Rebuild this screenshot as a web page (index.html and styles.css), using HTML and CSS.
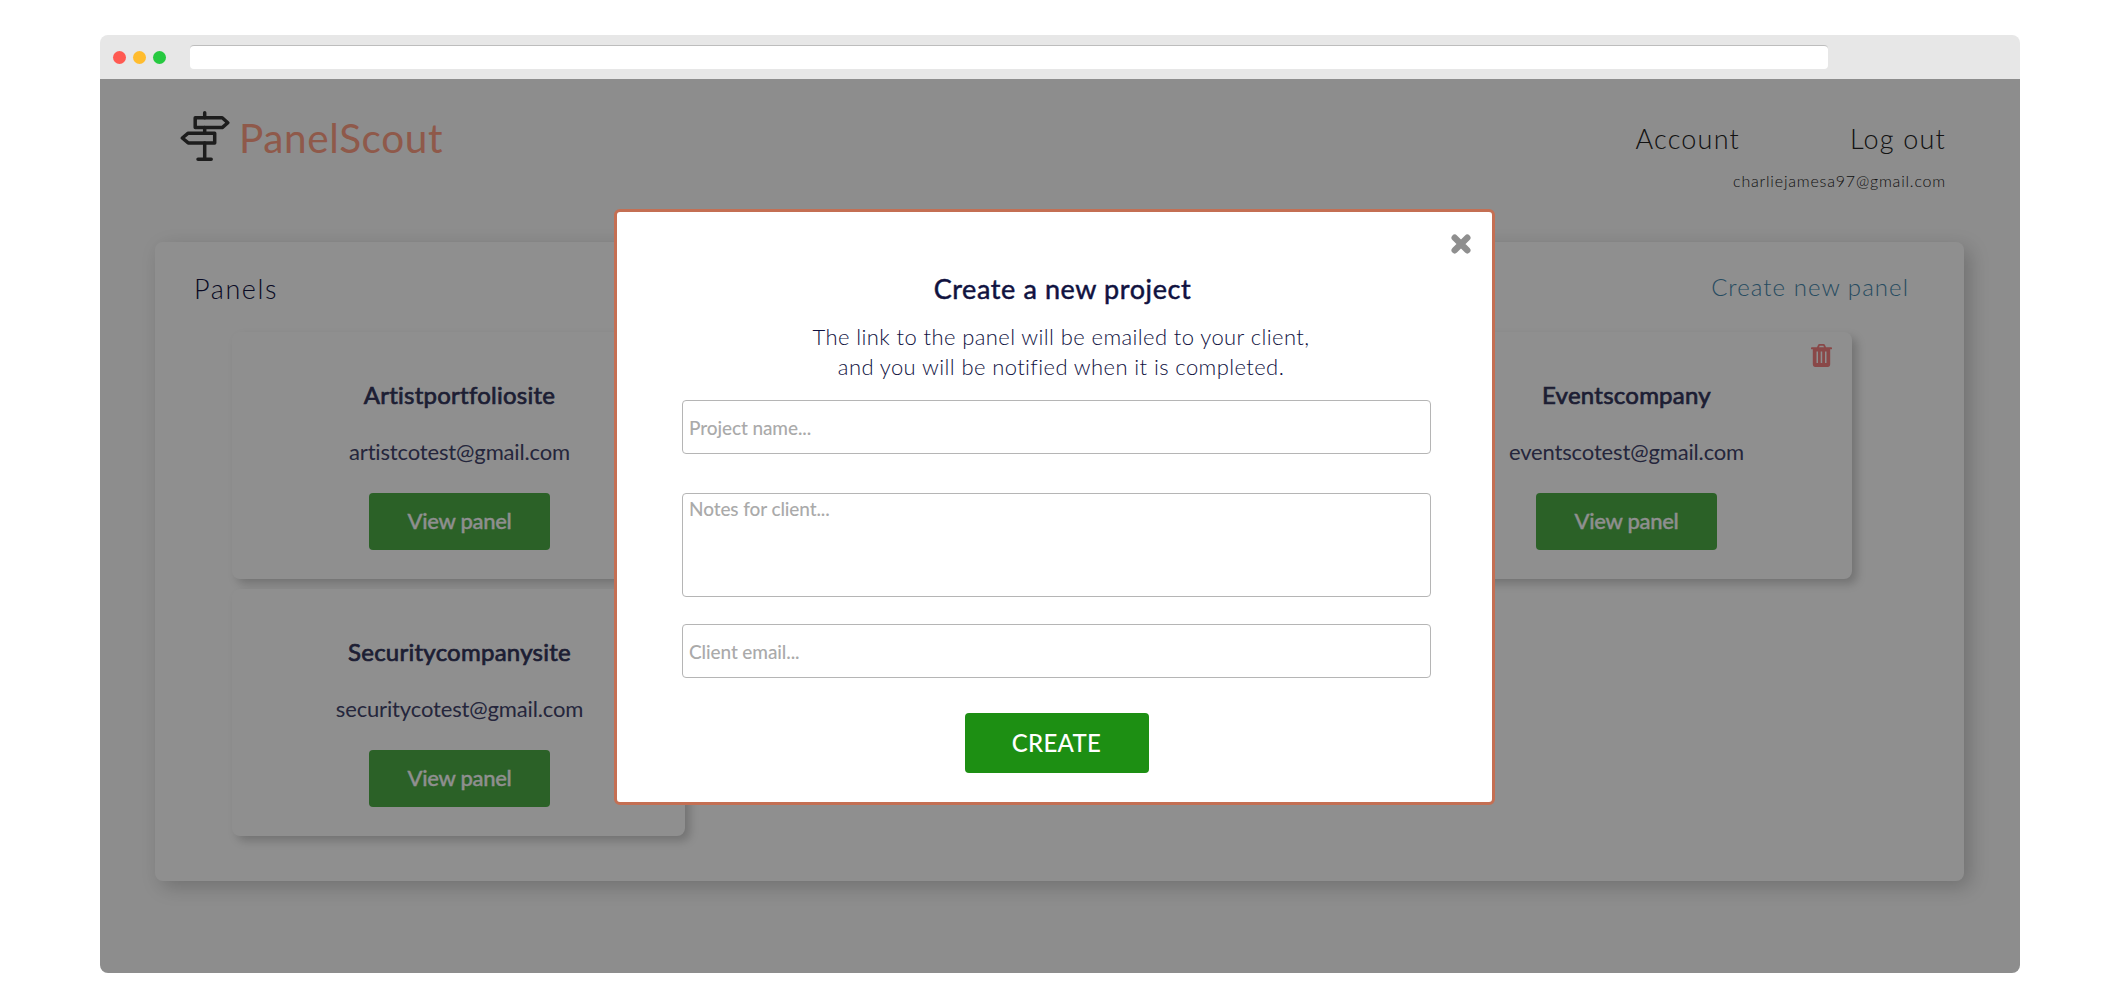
FILE: index.html
```html
<!DOCTYPE html>
<html lang="en">
  <head>
    <meta charset="UTF-8" />
    <meta name="viewport" content="width=device-width, initial-scale=1.0" />
    <title>PanelScout</title>
    <link rel="stylesheet" href="styles.css">
  </head>
  <body>
    <div class="browser">
      <div class="browser-bar">
        <span class="dot red"></span>
        <span class="dot yellow"></span>
        <span class="dot green"></span>
        <div class="address"></div>
      </div>
      <div class="page">
        <header class="header">
          <div class="logo">
            <svg class="logo-icon" viewBox="0 0 50 51" fill="none" stroke="#353535" stroke-width="3.5" stroke-linecap="round" stroke-linejoin="round">
              <path d="M24.700 1.800v5M24.700 16.500v5M24.700 32v16.300M18 48.300h13.200" />
              <path d="M15.200 6.800h27l5.600 4.900-5.600 4.900h-27z" />
              <path d="M34.700 22.200H8.200L2.300 27l5.900 4.900h26.500z" />
            </svg>
            <span class="logo-text">PanelScout</span>
          </div>
          <div class="nav">
            <div class="nav-links">
              <a class="account">Account</a>
              <a class="logout">Log out</a>
            </div>
            <div class="user-email">charliejamesa97@gmail.com</div>
          </div>
        </header>

        <main class="panels">
          <div class="panels-head">
            <h2 class="panels-title">Panels</h2>
            <a class="new-panel">Create new panel</a>
          </div>
          <div class="cards">
            <div class="card">
              <h3>Artistportfoliosite</h3>
              <p>artistcotest@gmail.com</p>
              <button class="view">View panel</button>
            </div>
            <div class="card"></div>
            <div class="card">
              <svg class="trash" viewBox="0 0 21 23">
                <path fill="#f58080" fill-rule="evenodd" d="M6 3.300 7 .9Q7.400 0 8.400 0h4.200q1 0 1.400.9l1 2.400h5.200q.8 0 .8.700v.700q0 .6-.7.600h-1.100V20q0 3-2.500 3H4.300q-2.500 0-2.500-3V5.300H.7Q0 5.300 0 4.700V4q0-.7.800-.7zM8 3.300h5l-.7-1.600H8.700zM5.500 7.500v11.500H7V7.500zM9.700 7.500v11.500h1.500V7.500zM14 7.500v11.500h1.500V7.500z" />
              </svg>
              <h3>Eventscompany</h3>
              <p>eventscotest@gmail.com</p>
              <button class="view">View panel</button>
            </div>
            <div class="card">
              <h3>Securitycompanysite</h3>
              <p>securitycotest@gmail.com</p>
              <button class="view">View panel</button>
            </div>
          </div>
        </main>

        <div class="overlay">
          <div class="modal">
            <svg class="close" viewBox="0 0 20 20" stroke="#8f8f8f" stroke-width="6.400" stroke-linecap="round">
              <path d="M3.700 3.700l12.600 12.600M16.300 3.700L3.700 16.300" />
            </svg>
            <h2 class="modal-title">Create a new project</h2>
            <p class="modal-text">The link to the panel will be emailed to your client,<br>and you will be notified when it is completed.</p>
            <form class="form">
              <input class="field" type="text" placeholder="Project name...">
              <textarea class="field notes" placeholder="Notes for client..."></textarea>
              <input class="field" type="text" placeholder="Client email...">
              <button class="create" type="button">CREATE</button>
            </form>
          </div>
        </div>
      </div>
    </div>
  </body>
</html>
```
FILE: styles.css
```css
* {
  box-sizing: border-box;
}
body {
  margin: 0;
  padding: 35px 100px;
  background-color: #fff;
  font-family: Lato, sans-serif;
  font-variant-ligatures: none;
  color: #10123f;
}
h2,
h3,
p {
  margin: 0;
  font-weight: 400;
}
.browser {
  height: 938px;
  border-radius: 8px;
  overflow: hidden;
}
.browser-bar {
  display: flex;
  align-items: center;
  gap: 7px;
  height: 44px;
  padding-left: 13px;
  background-color: #e7e7e7;
}
.dot {
  width: 13px;
  height: 13px;
  border-radius: 50%;
}
.red {
  background-color: #ff5a52;
}
.yellow {
  background-color: #ffbc2e;
}
.green {
  background-color: #26c940;
}
.address {
  width: 1638px;
  height: 24px;
  margin-left: 17px;
  background-color: #fff;
  border-top: 1px solid #bdbdbd;
  border-radius: 4px;
}
.page {
  position: relative;
  height: 894px;
  background-color: #fbfbfb;
}
.header {
  display: flex;
  justify-content: space-between;
  height: 163px;
  padding: 32px 74px 0 80px;
}
.logo {
  display: flex;
  gap: 9px;
  height: 52px;
}
.logo-icon {
  width: 50px;
  height: 51px;
}
.logo-text {
  font-size: 40.5px;
  line-height: 54px;
  letter-spacing: 0.6px;
  color: #ff9f84;
}
.nav {
  padding-top: 11px;
  text-align: right;
  font-weight: 300;
  color: #222;
}
.nav-links {
  display: flex;
  justify-content: flex-end;
  gap: 110px;
  font-size: 27px;
  line-height: 34px;
  letter-spacing: 1.2px;
}
.user-email {
  margin-top: 15px;
  font-size: 16px;
  line-height: 20px;
  letter-spacing: 0.8px;
}
.panels {
  height: 639px;
  margin: 0 56px 0 55px;
  background-color: #fff;
  border-radius: 8px;
  box-shadow: 6px 6px 20px rgba(0, 0, 0, 0.2);
}
.panels-head {
  display: flex;
  justify-content: space-between;
  height: 90px;
  padding: 30px 55px 0 39px;
}
.panels-title {
  font-size: 27px;
  font-weight: 300;
  line-height: 34px;
  letter-spacing: 1.6px;
}
.new-panel {
  font-size: 24px;
  font-weight: 300;
  line-height: 30px;
  letter-spacing: 1.05px;
  color: #4788ad;
}
.cards {
  display: grid;
  grid-template-columns: repeat(3, 453px);
  grid-auto-rows: 247px;
  gap: 10px 130.5px;
  margin-left: 77px;
}
.card {
  position: relative;
  display: flex;
  flex-direction: column;
  align-items: center;
  padding: 47px 0 0 2px;
  background-color: #fff;
  border-radius: 8px;
  box-shadow: 5px 5px 10px rgba(0, 0, 0, 0.2);
}
.card h3 {
  font-size: 24px;
  line-height: 31px;
  letter-spacing: 0.25px;
  color: #34365c;
  -webkit-text-stroke: 0.7px #34365c;
}
.card p {
  margin: 28px 0 27px;
  font-size: 22px;
  line-height: 28px;
  letter-spacing: -0.15px;
  color: #42446c;
}
.view {
  width: 181px;
  height: 57px;
  padding-bottom: 3px;
  border: none;
  border-radius: 4px;
  background-color: #4dad47;
  color: #fff;
  font: 500 22px Lato, sans-serif;
  letter-spacing: -0.3px;
  -webkit-text-stroke: 0.3px #fff;
}
.trash {
  position: absolute;
  top: 12px;
  right: 20px;
  width: 21px;
  height: 23px;
}
.overlay {
  position: absolute;
  inset: 0;
  padding: 130px 0 0 514px;
  background-color: rgba(0, 0, 0, 0.44);
}
.modal {
  position: relative;
  width: 881px;
  height: 596px;
  padding: 57px 61px 0 65px;
  border: 3px solid #c46f53;
  border-radius: 6px;
  background-color: #fff;
}
.close {
  position: absolute;
  top: 22px;
  right: 21px;
  width: 20px;
  height: 20px;
}
.modal-title {
  padding-left: 12px;
  font-size: 27px;
  line-height: 40px;
  letter-spacing: 0.6px;
  text-align: center;
  -webkit-text-stroke: 0.5px #10123f;
}
.modal-text {
  margin: 13px 0 18px;
  padding-left: 9px;
  font-size: 22px;
  font-weight: 300;
  line-height: 30px;
  letter-spacing: 0.4px;
  text-align: center;
}
.form {
  display: flex;
  flex-direction: column;
  align-items: center;
}
.field {
  width: 100%;
  height: 54px;
  padding: 2px 6px;
  border: 1px solid #b5b5b5;
  border-radius: 4px;
  font: 500 19px Lato, sans-serif;
  letter-spacing: -0.1px;
  resize: none;
}
.field::placeholder {
  color: #aaa;
}
.notes {
  height: 104px;
  margin: 39px 0 27px;
  padding-top: 3px;
}
.create {
  width: 184px;
  height: 60px;
  margin-top: 35px;
  padding-bottom: 2px;
  border: none;
  border-radius: 4px;
  background-color: #1d8f13;
  color: #fff;
  font: 500 24px Lato, sans-serif;
  letter-spacing: 0.3px;
}
```
